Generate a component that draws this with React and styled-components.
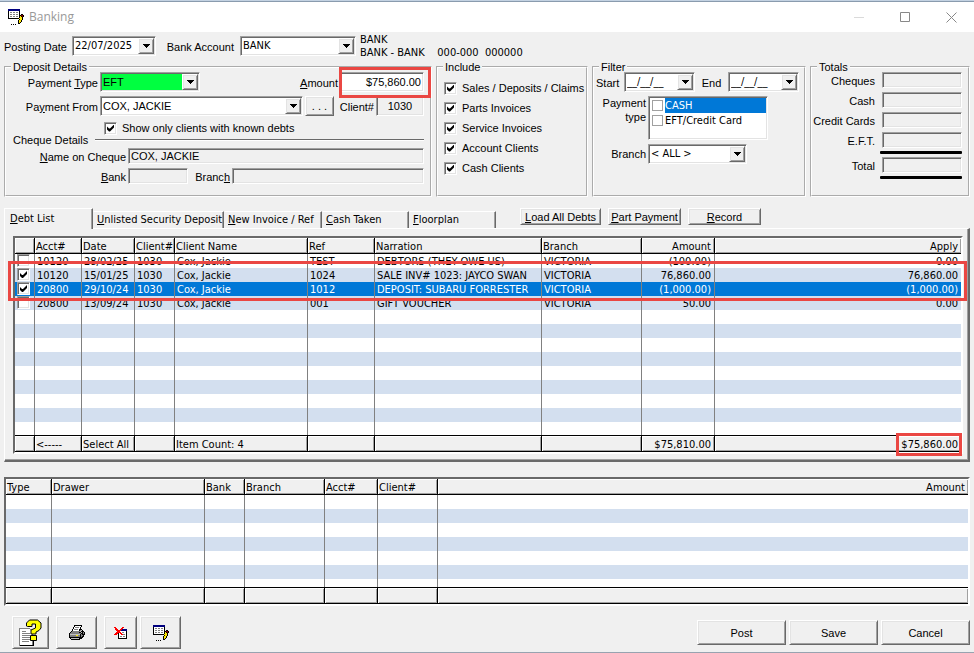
import React, { useState } from 'react';
import styled, { createGlobalStyle, css } from 'styled-components';

const SANS = '"Liberation Sans", Arial, sans-serif';
const TAHOMA = '"DejaVu Sans Condensed", "DejaVu Sans", sans-serif';

const FACE = '#f0f0f0';
const SHADOW = '#a0a0a0';
const DARK = '#696969';
const LIGHT = '#e3e3e3';
const SELECTED = '#0078d7';
const STRIPE = '#d3dfef';
const MARKER = '#ea4743';

const GlobalStyle = createGlobalStyle`
  * {
    box-sizing: border-box;
  }

  body {
    margin: 0;
    background: ${FACE};
    color: #000;
    font: 11px/14px ${SANS};
  }

  button, input, select {
    font: inherit;
    color: inherit;
    margin: 0;
    padding: 0;
    border: 0;
    border-radius: 0;
  }
`;

const sunken = css`
  border: 1px solid;
  border-color: ${SHADOW} #fff #fff ${SHADOW};
  box-shadow: inset 1px 1px ${DARK}, inset -1px -1px ${LIGHT};
`;

const raised = css`
  background: ${FACE};
  border: 1px solid;
  border-color: #fff ${DARK} ${DARK} #fff;
  box-shadow: inset 1px 1px ${LIGHT}, inset -1px -1px ${SHADOW};
`;

/* window frame */

const Window = styled.div`
  display: flex;
  flex-direction: column;
  min-height: 100vh;
  border-top: 1px solid #c3d2e2;
  border-bottom: 1px solid #98a3b0;
`;

const TitleBar = styled.header`
  display: flex;
  align-items: center;
  height: 31px;
  padding-left: 8px;
  background: #fff;
  border-top: 1px solid #8a9bae;
`;

const Title = styled.h1`
  flex: 1;
  margin: 0 0 0 5px;
  color: #999;
  font: 12px/16px "Open Sans", sans-serif;
`;

const WindowButton = styled.button`
  display: flex;
  align-items: center;
  justify-content: center;
  width: 46px;
  height: 28px;
  background: none;
  opacity: ${props => (props.disabled ? 0.3 : 1)};
`;

const Content = styled.main`
  flex: 1;
  padding: 4px 4px 2px;
`;

/* controls */

const Row = styled.div`
  display: flex;
  align-items: center;
  gap: 2px;
  height: ${props => props.$height || 20}px;
  margin-bottom: ${props => props.$after || 0}px;
`;

const Label = styled.label`
  flex: none;
  width: ${props => (props.$width ? `${props.$width}px` : 'auto')};
  padding-top: 2px;
  text-align: ${props => props.$align || 'right'};
  white-space: nowrap;
`;

const Spacer = styled.div`
  flex: 1;
`;

const FieldBox = styled.div`
  ${sunken}
  position: relative;
  display: flex;
  flex: ${props => (props.$width ? 'none' : '1')};
  width: ${props => (props.$width ? `${props.$width}px` : 'auto')};
  min-width: 0;
  height: ${props => props.$height || 20}px;
  padding: 1px;
  background: ${props => props.$color || '#fff'};
`;

const TextInput = styled.input`
  flex: 1;
  width: 0;
  min-width: 0;
  padding: 0 1px;
  background: transparent;
  outline: none;
  font: 11px/14px ${props => (props.$tahoma ? TAHOMA : SANS)};
  text-align: ${props => props.$align || 'left'};
`;

const Select = styled.select`
  flex: 1;
  width: 0;
  min-width: 0;
  padding: 0 1px;
  appearance: none;
  background: transparent;
  outline: none;
  font: 11px/14px ${props => (props.$tahoma ? TAHOMA : SANS)};
`;

const ArrowBox = styled.span`
  ${raised}
  display: flex;
  flex: none;
  align-items: center;
  justify-content: center;
  width: 16px;
  pointer-events: none;
`;

const Arrow = () => (
  <ArrowBox>
    <svg width="7" height="4" viewBox="0 0 7 4" shapeRendering="crispEdges">
      <path d="M0 0h7v1H0zM1 1h5v1H1zM2 2h3v1H2zM3 3h1v1H3z" />
    </svg>
  </ArrowBox>
);

const Combo = ({ id, options, width, color, tahoma }) => (
  <FieldBox $width={width} $color={color}>
    <Select id={id} $tahoma={tahoma}>
      {options.map(option => <option key={option}>{option}</option>)}
    </Select>
    <Arrow />
  </FieldBox>
);

const DateBox = ({ id, value, width }) => (
  <FieldBox $width={width}>
    <TextInput id={id} defaultValue={value} $tahoma />
    <Arrow />
  </FieldBox>
);

const ReadOnlyBox = ({ id, value, width, height = 16, align }) => (
  <FieldBox $width={width} $height={height} $color={FACE}>
    <TextInput id={id} defaultValue={value} $align={align} readOnly />
  </FieldBox>
);

const CheckBox = styled.input.attrs({ type: 'checkbox' })`
  ${sunken}
  position: relative;
  flex: none;
  width: 13px;
  height: 13px;
  appearance: none;
  background: #fff;

  &:checked::after {
    content: '';
    display: block;
    width: 7px;
    height: 7px;
    margin: 2px;
    background: #000;
    clip-path: polygon(0 2px, 2px 4px, 3px 4px, 7px 0, 7px 3px, 3px 7px, 2px 7px, 0 5px);
  }
`;

const CheckLabel = styled.label`
  display: flex;
  align-items: center;
  gap: 5px;
  height: 20px;
  white-space: nowrap;
`;

const Button = styled.button`
  ${raised}
  flex: none;
  width: ${props => props.$width}px;
  height: ${props => props.$height}px;
  line-height: 14px;
  white-space: nowrap;
`;

const IconButton = styled(Button)`
  display: flex;
  align-items: center;
  justify-content: center;
`;

const Highlight = styled.div`
  position: absolute;
  z-index: 2;
  border: 3px solid ${MARKER};
  pointer-events: none;
`;

/* sections */

const AccountRow = styled.div`
  display: flex;
  align-items: flex-start;
  height: 26px;
`;

const AccountLabel = styled(Label)`
  padding: 4px 6px 0 0;
`;

const AccountInfo = styled.div`
  font: 11px/13px ${TAHOMA};
  white-space: pre;
  margin-left: 4px;
  margin-top: -3px;
`;

const Groups = styled.div`
  display: grid;
  grid-template-columns: 428fr 152fr 214fr 160fr;
  gap: 4px;
`;

const Group = styled.fieldset`
  min-width: 0;
  height: 135px;
  margin: 0;
  padding: 0 6px 0 0;
  border: 2px groove #fff;
`;

const Legend = styled.legend`
  height: 10px;
  margin-left: 5px;
  padding: 0 2px;
  line-height: 11px;
`;

const KnownDebts = styled(CheckLabel)`
  height: 16px;
  padding-left: 98px;
`;

const ChequeDivider = styled.div`
  display: flex;
  align-items: center;
  gap: 7px;
  height: 8px;
  margin-bottom: 4px;
  padding-left: 7px;

  &::after {
    content: '';
    flex: 1;
    border-top: 1px solid ${DARK};
    border-bottom: 1px solid #fff;
  }
`;

const IncludeList = styled.div`
  padding: 6px 0 0 6px;
`;

const FilterBody = styled.div`
  padding-left: 2px;
`;

const PaymentTypes = styled.div`
  ${sunken}
  width: 120px;
  height: 44px;
  padding: 1px;
  background: #fff;
`;

const PaymentType = styled.label`
  display: flex;
  align-items: center;
  gap: 2px;
  height: 15px;
  padding-left: 2px;
  font: 11px/15px ${TAHOMA};
  white-space: nowrap;

  input {
    width: 11px;
    height: 11px;
    flex: none;
    appearance: none;
    background: #fff;
    border: 1px solid ${SHADOW};
  }

  span {
    flex: 1;
    background: ${props => (props.$selected ? SELECTED : 'transparent')};
    color: ${props => (props.$selected ? '#fff' : '#000')};
  }
`;

const FilterRow = styled(Row)`
  align-items: flex-start;
  height: auto;
  line-height: 14px;

  & > label, & > span {
    padding-top: ${props => props.$top || 0}px;
    white-space: normal;
  }
`;

const TotalRow = styled.div`
  display: flex;
  align-items: flex-end;
  justify-content: flex-end;
  gap: 7px;

  & + & {
    margin-top: 4px;
  }
`;

const Rule = styled.div`
  width: 82px;
  height: 3px;
  margin: 3px 0 3px auto;
  background: #000;
  border-radius: 1px;
`;

/* tabs and grids */

const TabRow = styled.div`
  display: flex;
  align-items: flex-end;
  height: 20px;
  margin-top: 11px;
`;

const Tab = styled.button`
  flex: none;
  position: relative;
  width: ${props => props.$width}px;
  height: ${props => (props.$active ? 21 : 17)}px;
  margin-bottom: ${props => (props.$active ? -1 : 0)}px;
  padding-left: ${props => (props.$active ? 5 : 3)}px;
  background: ${FACE};
  border: 1px solid;
  border-color: #fff ${DARK} ${FACE} ${props => (props.$active ? '#fff' : FACE)};
  border-bottom: 0;
  box-shadow: inset -1px 0 ${SHADOW};
  font: 11px/14px ${TAHOMA};
  text-align: left;
  white-space: nowrap;
`;

const TabActions = styled.div`
  display: flex;
  gap: 7px;
  margin-left: 24px;
  padding-bottom: 3px;
`;

const Panel = styled.section`
  padding: 7px 5px 6px 8px;
  border: solid;
  border-width: 1px 2px 2px 1px;
  border-color: #fff ${DARK} ${DARK} #fff;
  box-shadow: inset -1px -1px ${SHADOW};
`;

const GridFrame = styled.div`
  position: relative;
  border: 2px solid;
  border-color: ${DARK} #fff #fff ${DARK};
`;

const ReceiptGrid = styled(GridFrame)`
  margin-top: 15px;
`;

const Table = styled.table`
  width: 100%;
  table-layout: fixed;
  border-spacing: 0;
  font: 11px/13px ${TAHOMA};
`;

const barCell = css`
  height: 16px;
  padding: 2px 3px 0 1px;
  background: ${FACE};
  border-right: 1px solid #000;
  box-shadow: inset 1px 1px #fff, inset -1px -1px ${SHADOW};
  font-weight: normal;
  text-align: ${props => props.$align || 'left'};
  vertical-align: top;
  white-space: nowrap;

  &:last-child {
    border-right: 0;
  }
`;

const HeadCell = styled.th`
  ${barCell}
  border-bottom: 1px solid #000;
`;

const FootCell = styled.td`
  ${barCell}
  position: relative;
  height: 17px;
  border-top: 1px solid #000;
  border-bottom: 1px solid #000;
`;

const BodyRow = styled.tr`
  background: ${props => (props.$selected ? SELECTED : '#fff')};
  color: ${props => (props.$selected ? '#fff' : '#000')};

  &:nth-child(even) {
    background: ${STRIPE};
  }
`;

const Cell = styled.td`
  height: ${props => props.$height || 14}px;
  padding: 0 3px 0 2px;
  border-right: 1px solid #808080;
  text-align: ${props => props.$align || 'left'};
  vertical-align: top;
  white-space: nowrap;
  overflow: hidden;

  & + & {
    padding-top: 1px;
  }

  &:last-child {
    border-right: 0;
  }

  input {
    display: block;
  }
`;

const Footer = styled.footer`
  display: flex;
  align-items: center;
  margin-top: 10px;
  padding-left: 8px;
`;

const Tools = styled.div`
  display: flex;
  gap: 7px;
  flex: 1;
`;

const ButtonGroup = styled.div`
  display: flex;
  gap: 3px;
`;

/* icons */

const PALETTE = {
  k: '#000', n: '#000080', g: '#808080', l: '#c0c0c0', w: '#fff', y: '#ffe800', r: '#f00', m: '#800000',
};

const PixelIcon = ({ rows }) => (
  <svg
    width={rows[0].length}
    height={rows.length}
    viewBox={`0 0 ${rows[0].length} ${rows.length}`}
    shapeRendering="crispEdges"
    aria-hidden="true"
  >
    {rows.map((row, y) => row.split('').map((c, x) => (
      PALETTE[c] && <rect key={`${x}-${y}`} x={x} y={y} width="1" height="1" fill={PALETTE[c]} />
    )))}
  </svg>
);

const EDIT_ICON = [
  'nnnnnnnnnnnn....',
  'nnnnnnnnnnnn....',
  'kwwwwwwwwwwk....',
  'kwggwggwggwk....',
  'kwwwwwwwwwwk....',
  'kwggwggwggwk.kk.',
  'kwwwwwwwwwwkkmmk',
  'kwggwggwggwkykmk',
  'kwwwwwwwwwwkyyk.',
  'kkkkkkkkkkkyyyk.',
  '...........kyyk.',
  '..........kyyk..',
  '..........kyyk..',
  '..........kyk...',
  '..........kk....',
  '...k.k.k........',
];

const DELETE_ICON = [
  'rr......rr...',
  '.rr....rr....',
  '.rrr..rrnnnnn',
  '..rrrrrnnnnnn',
  '...rrrwwwwwwk',
  '..rrrrrwggwwk',
  '.rrrkwrrwwwwk',
  'rrr.kwwrrggwk',
  '....kwwwwwwwk',
  '....kwggwggwk',
  '....kwwwwwwwk',
  '....kkkkkkkkk',
];

const PRINTER_ICON = [
  '.....kkkkkkkk...',
  '.....kwwwwwwk...',
  '....kwggggwk....',
  '....kwwwwwwk....',
  '...kwggggwkkk...',
  '...kwwwwwwkglk..',
  '..kgggggggglkkk.',
  '.kggggggggkklkgk',
  'kgggggggggggkkgk',
  'kllllllllllkgkkk',
  'kggggggyyggkggk.',
  'kggggggggggkgkk.',
  'kkkkkkkkkkkkkk..',
  '.kllllllllkkk...',
  '..kkkkkkkkk.....',
];

const HelpIcon = () => (
  <svg width="23" height="27" viewBox="0 0 23 27" aria-hidden="true">
    <path d="M.5 9.5h10l3 3v14H.5z" fill="#fff" stroke="#808080" shapeRendering="crispEdges" />
    <path d="M1 26.5h13v-6" fill="none" stroke="#000" shapeRendering="crispEdges" />
    <path
      d="M3 12.5h4M3 14.5h8M3 16.5h8M3 18.5h8M3 20.5h8M3 22.5h7"
      stroke="#808080"
      shapeRendering="crispEdges"
    />
    <path
      d="M7.500 7V4l3-3h8l3.500 3v5l-2 2.500-3 1.500v2h-5v-4l4.500-2V5h-3.500v2.500h-4.500z"
      fill="#ff0"
      stroke="#000"
    />
    <path d="M11.500 16.500h6v5h-6z" fill="#ff0" stroke="#000" />
  </svg>
);

/* data */

const include = ['Sales / Deposits / Claims', 'Parts Invoices', 'Service Invoices', 'Account Clients', 'Cash Clients'];

const debts = [
  ['10120', '28/02/25', '1030', 'Cox, Jackie', 'TEST', 'DEBTORS (THEY OWE US)', 'VICTORIA', '(100.00)', '0.00'],
  ['10120', '15/01/25', '1030', 'Cox, Jackie', '1024', 'SALE INV# 1023: JAYCO SWAN', 'VICTORIA', '76,860.00', '76,860.00'],
  ['20800', '29/10/24', '1030', 'Cox, Jackie', '1012', 'DEPOSIT: SUBARU FORRESTER', 'VICTORIA', '(1,000.00)', '(1,000.00)'],
  ['20800', '13/09/24', '1030', 'Cox, Jackie', '001', 'GIFT VOUCHER', 'VICTORIA', '50.00', '0.00'],
];

const debtColumns = [
  { title: '', width: 20 },
  { title: 'Acct#', width: 47, foot: '<-----' },
  { title: 'Date', width: 53, foot: 'Select All' },
  { title: 'Client#', width: 40 },
  { title: 'Client Name', width: 133, foot: 'Item Count: 4' },
  { title: 'Ref', width: 67 },
  { title: 'Narration', width: 167 },
  { title: 'Branch', width: 100 },
  { title: 'Amount', width: 73, align: 'right', foot: '$75,810.00' },
  { title: 'Apply', align: 'right', foot: '$75,860.00', marked: true },
];

const receiptColumns = [
  { title: 'Type', width: 46 },
  { title: 'Drawer', width: 153 },
  { title: 'Bank', width: 40 },
  { title: 'Branch', width: 80 },
  { title: 'Acct#', width: 53 },
  { title: 'Client#', width: 60 },
  { title: 'Amount', align: 'right' },
];

const tabs = [
  { key: 'D', rest: 'ebt List', width: 89 },
  { key: 'U', rest: 'nlisted Security Deposit', width: 131 },
  { key: 'N', rest: 'ew Invoice / Ref', width: 98 },
  { key: 'C', rest: 'ash Taken', width: 87 },
  { key: 'F', rest: 'loorplan', width: 87 },
];

const FootMark = styled(Highlight)`
  top: -3px;
  right: -1px;
  width: 66px;
  height: 23px;
`;

const DataGrid = ({ columns, rows = [], rowCount, lastHeight }) => {
  const [ticked, setTicked] = useState([1, 2]);
  const toggle = index => setTicked(
    ticked.includes(index) ? ticked.filter(i => i !== index) : [...ticked, index],
  );

  return (
    <Table>
      <colgroup>
        {columns.map(col => <col key={col.title} style={{ width: col.width }} />)}
      </colgroup>
      <thead>
        <tr>
          {columns.map(col => <HeadCell key={col.title} $align={col.align}>{col.title}</HeadCell>)}
        </tr>
      </thead>
      <tbody>
        {Array.from({ length: rowCount }, (_, index) => {
          const row = rows[index];
          const height = index === rowCount - 1 ? lastHeight : 14;
          return (
            <BodyRow key={index} $selected={Boolean(row) && index === 2}>
              {columns.map((col, c) => (
                <Cell key={col.title} $align={col.align} $height={height}>
                  {row && c === 0 && (
                    <CheckBox
                      aria-label={`Select ${row[5]}`}
                      checked={ticked.includes(index)}
                      onChange={() => toggle(index)}
                    />
                  )}
                  {row && c > 0 && row[c - 1]}
                </Cell>
              ))}
            </BodyRow>
          );
        })}
      </tbody>
      <tfoot>
        <tr>
          {columns.map(col => (
            <FootCell key={col.title} $align={col.align}>
              {col.foot}
              {col.marked && <FootMark />}
            </FootCell>
          ))}
        </tr>
      </tfoot>
    </Table>
  );
};

const AmountMark = styled(Highlight)`
  inset: -6px -8px -7px -2px;
`;

const RowsMark = styled(Highlight)`
  top: 23px;
  left: -7px;
  right: -6px;
  height: 40px;
`;

const Total = ({ id, label }) => (
  <TotalRow>
    <Label htmlFor={id}>{label}</Label>
    <ReadOnlyBox id={id} value="" width={80} />
  </TotalRow>
);

const App = () => {
  const [activeTab, setActiveTab] = useState('D');

  return (
    <Window>
      <GlobalStyle />
      <TitleBar>
        <PixelIcon rows={EDIT_ICON} />
        <Title>Banking</Title>
        <WindowButton type="button" aria-label="Minimize" disabled>
          <svg width="11" height="11"><path d="M0 5.500h10" stroke="#888" /></svg>
        </WindowButton>
        <WindowButton type="button" aria-label="Maximize">
          <svg width="11" height="11"><path d="M.5.5h9v9h-9z" fill="none" stroke="#888" /></svg>
        </WindowButton>
        <WindowButton type="button" aria-label="Close">
          <svg width="11" height="11"><path d="M.5.5l10 10M10.500.5l-10 10" stroke="#888" /></svg>
        </WindowButton>
      </TitleBar>

      <Content>
        <AccountRow>
          <AccountLabel htmlFor="posting-date" $width={68}>Posting Date</AccountLabel>
          <DateBox id="posting-date" value="22/07/2025" width={84} />
          <AccountLabel htmlFor="bank-account" $width={84}>Bank Account</AccountLabel>
          <Combo id="bank-account" options={['BANK']} width={116} tahoma />
          <AccountInfo>{'BANK\nBANK - BANK    000-000  000000'}</AccountInfo>
        </AccountRow>

        <Groups>
          <Group>
            <Legend>Deposit Details</Legend>
            <Row $after={4}>
              <Label htmlFor="payment-type" $width={92}>Payment <u>T</u>ype</Label>
              <Combo id="payment-type" options={['EFT']} width={100} color="#00ff40" />
              <Spacer />
              <Label htmlFor="amount"><u>A</u>mount</Label>
              <FieldBox $width={84}>
                <TextInput id="amount" defaultValue="$75,860.00" $align="right" />
                <AmountMark />
              </FieldBox>
            </Row>
            <Row $after={4}>
              <Label htmlFor="payment-from" $width={92}>Pa<u>y</u>ment From</Label>
              <Combo id="payment-from" options={['COX, JACKIE']} />
              <Button type="button" $width={29} $height={20}>. . .</Button>
              <Label htmlFor="client" $width={38}>Client#</Label>
              <ReadOnlyBox id="client" value="1030" width={48} height={20} align="center" />
            </Row>
            <KnownDebts>
              <CheckBox defaultChecked />
              Show only clients with known debts
            </KnownDebts>
            <ChequeDivider>Cheque Details</ChequeDivider>
            <Row $height={16} $after={4}>
              <Label htmlFor="cheque-name" $width={120}><u>N</u>ame on Cheque</Label>
              <ReadOnlyBox id="cheque-name" value="COX, JACKIE" />
            </Row>
            <Row $height={16}>
              <Label htmlFor="cheque-bank" $width={120}><u>B</u>ank</Label>
              <ReadOnlyBox id="cheque-bank" value="" width={60} />
              <Label htmlFor="cheque-branch" $width={40}>Branc<u>h</u></Label>
              <ReadOnlyBox id="cheque-branch" value="" />
            </Row>
          </Group>

          <Group>
            <Legend>Include</Legend>
            <IncludeList>
              {include.map(label => (
                <CheckLabel key={label}>
                  <CheckBox defaultChecked />
                  {label}
                </CheckLabel>
              ))}
            </IncludeList>
          </Group>

          <Group>
            <Legend>Filter</Legend>
            <FilterBody>
              <Row $after={4}>
                <Label htmlFor="start" $width={26} $align="left">Start</Label>
                <DateBox id="start" value="__/__/__" width={71} />
                <Label htmlFor="end" $width={29} $align="center">End</Label>
                <DateBox id="end" value="__/__/__" width={71} />
              </Row>
              <FilterRow $after={4}>
                <Label as="span" $width={50}>Payment type</Label>
                <PaymentTypes>
                  <PaymentType $selected>
                    <input type="checkbox" />
                    <span>CASH</span>
                  </PaymentType>
                  <PaymentType>
                    <input type="checkbox" />
                    <span>EFT/Credit Card</span>
                  </PaymentType>
                </PaymentTypes>
              </FilterRow>
              <FilterRow $top={3}>
                <Label htmlFor="branch" $width={50}>Branch</Label>
                <Combo id="branch" options={['< ALL >']} width={99} tahoma />
              </FilterRow>
            </FilterBody>
          </Group>

          <Group>
            <Legend>Totals</Legend>
            <Total id="total-cheques" label="Cheques" />
            <Total id="total-cash" label="Cash" />
            <Total id="total-cards" label="Credit Cards" />
            <Total id="total-eft" label="E.F.T." />
            <Rule />
            <Total id="total" label="Total" />
            <Rule />
          </Group>
        </Groups>

        <TabRow>
          {tabs.map(tab => (
            <Tab
              key={tab.key}
              type="button"
              $width={tab.width}
              $active={tab.key === activeTab}
              onClick={() => setActiveTab(tab.key)}
            >
              <u>{tab.key}</u>{tab.rest}
            </Tab>
          ))}
          <TabActions>
            <Button type="button" $width={81} $height={17}><u>L</u>oad All Debts</Button>
            <Button type="button" $width={73} $height={17}><u>P</u>art Payment</Button>
            <Button type="button" $width={73} $height={17}><u>R</u>ecord</Button>
          </TabActions>
        </TabRow>
        <Panel>
          <GridFrame>
            <DataGrid columns={debtColumns} rows={debts} rowCount={13} lastHeight={13} />
            <RowsMark />
          </GridFrame>
        </Panel>

        <ReceiptGrid>
          <DataGrid columns={receiptColumns} rowCount={7} lastHeight={8} />
        </ReceiptGrid>

        <Footer>
          <Tools>
            <IconButton type="button" aria-label="Help" $width={37} $height={33}><HelpIcon /></IconButton>
            <IconButton type="button" aria-label="Print" $width={41} $height={33}><PixelIcon rows={PRINTER_ICON} /></IconButton>
            <ButtonGroup>
              <IconButton type="button" aria-label="Delete" $width={33} $height={33}><PixelIcon rows={DELETE_ICON} /></IconButton>
              <IconButton type="button" aria-label="Edit" $width={41} $height={33}><PixelIcon rows={EDIT_ICON} /></IconButton>
            </ButtonGroup>
          </Tools>
          <ButtonGroup>
            <Button type="button" $width={89} $height={25}>Post</Button>
            <Button type="button" $width={89} $height={25}>Save</Button>
            <Button type="button" $width={89} $height={25}>Cancel</Button>
          </ButtonGroup>
        </Footer>
      </Content>
    </Window>
  );
};

export default App;
